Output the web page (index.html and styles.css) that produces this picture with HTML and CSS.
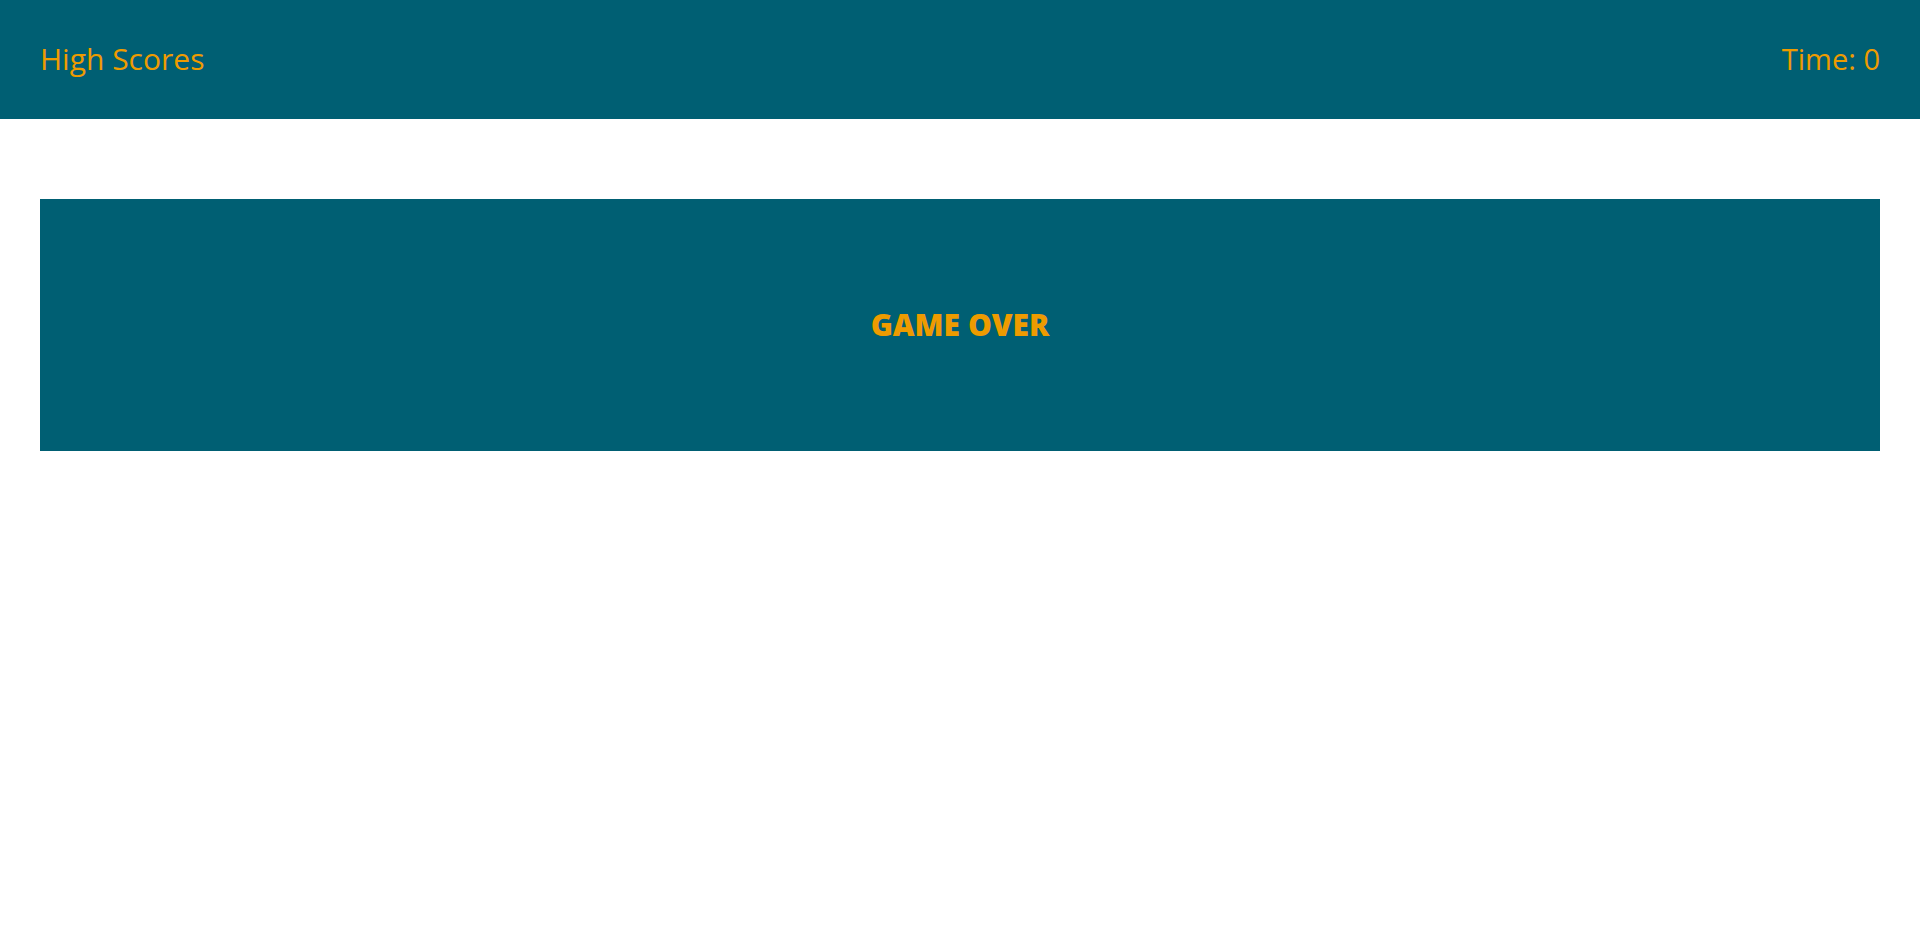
FILE: index.html
```html
<!DOCTYPE html>
<html lang="en">
<head>
<meta charset="utf-8">
<title>Game Over</title>
<link rel="stylesheet" href="styles.css">
</head>
<body>
<header class="topbar">
  <a class="topbar__link" href="#">High Scores</a>
  <span class="topbar__time">Time: 0</span>
</header>
<main class="content">
  <section class="panel">
    <h1 class="panel__title">GAME OVER</h1>
  </section>
</main>
</body>
</html>
```
FILE: styles.css
```css
* { box-sizing: border-box; }
html, body { margin: 0; padding: 0; background: #ffffff; }
body { font-family: "Open Sans", "Liberation Sans", sans-serif; color: #ee9b00; }
.topbar {
  height: 119px;
  background: #005f73;
  display: flex;
  align-items: center;
  justify-content: space-between;
  padding: 0 40px 2px 40px;
}
.topbar__link, .topbar__time {
  color: #ee9b00;
  text-decoration: none;
  font-size: 30px;
  font-weight: 400;
  line-height: 1;
}
.topbar__time { font-size: 29px; }
.content { padding: 80px 40px 0 40px; }
.panel {
  height: 252px;
  background: #005f73;
  display: flex;
  align-items: center;
  justify-content: center;
}
.panel__title {
  margin: 0;
  font-size: 30px;
  font-weight: 800;
  color: #ee9b00;
  line-height: 1;
}
```
